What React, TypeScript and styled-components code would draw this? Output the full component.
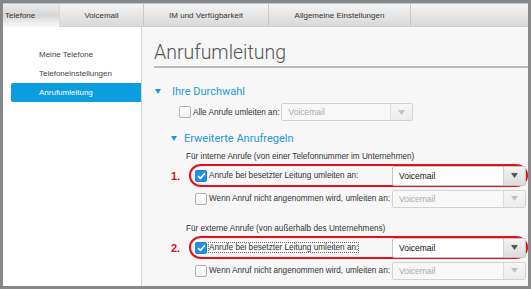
import styled, { createGlobalStyle } from "styled-components";

const GlobalStyle = createGlobalStyle`
  html, body {
    margin: 0;
    padding: 0;
  }
  body {
    background: #878787;
    font-family: "Liberation Sans", Arial, sans-serif;
  }
`;

const Frame = styled.div`
  width: 531px;
  height: 289px;
  box-sizing: border-box;
  padding: 3px;
  display: flex;
  flex-direction: column;
  overflow: hidden;
`;

const TabBar = styled.div`
  display: flex;
  flex: none;
  height: 24px;
  box-sizing: border-box;
  border-top: 1px solid #b4cadb;
  border-bottom: 1px solid #d0d0d0;
  background: linear-gradient(#f4f4f4, #d9d9d9);
`;

const Tab = styled.div<{ $width: number; $active?: boolean }>`
  width: ${(p) => p.$width}px;
  box-sizing: border-box;
  border-right: 1px solid #c9c9c9;
  display: flex;
  align-items: center;
  justify-content: ${(p) => (p.$active ? "flex-start" : "center")};
  padding-left: ${(p) => (p.$active ? "2px" : "0")};
  font-size: 8px;
  color: #333;
  ${(p) =>
    p.$active &&
    `
    background: linear-gradient(#ececec 0%, #d6d6d6 50%, #fbfbfb 100%);
    margin-bottom: -1px;
    border-right: 1px solid #d9d9d9;
  `}
`;

const Main = styled.div`
  flex: 1;
  display: flex;
  min-height: 0;
`;

const Sidebar = styled.nav`
  width: 138px;
  flex: none;
  background: #fff;
  border-right: 1px solid #d6d6d6;
  padding-top: 18px;
`;

const NavItem = styled.div<{ $active?: boolean }>`
  height: 19px;
  line-height: 19px;
  font-size: 8px;
  color: #444;
  padding-left: 36px;
  ${(p) =>
    p.$active &&
    `
    margin-left: 8px;
    padding-left: 28px;
    background: #0b9ddd;
    color: #fff;
    border-radius: 2px 0 0 2px;
  `}
`;

const Content = styled.main`
  flex: 1;
  background: #f7f7f7;
  padding: 14px 0 0 12px;
  overflow: hidden;
`;

const Title = styled.h1`
  margin: 0;
  font-family: Roboto, "Liberation Sans", sans-serif;
  font-weight: 300;
  font-size: 19.5px;
  line-height: 24px;
  color: #555;
  padding-bottom: 1px;
  border-bottom: 2px solid #b9b9b9;
  box-shadow: inset 0 -1px 0 #fff;
`;

const SectionHeader = styled.div<{ $indent: number; $gap: number; $top: number }>`
  display: flex;
  align-items: center;
  height: 16px;
  margin: ${(p) => p.$top}px 0 0 ${(p) => p.$indent}px;
  gap: ${(p) => p.$gap}px;
  font-family: Roboto, "Liberation Sans", sans-serif;
  font-size: 11px;
  color: #1b9ad6;
`;

const Caret = () => (
  <svg width="6" height="5" viewBox="0 0 6 5">
    <path d="M0 0 H6 L3 5 Z" fill="#1b9ad6" />
  </svg>
);

const CheckRow = styled.div`
  display: flex;
  align-items: center;
  height: 18px;
  margin: 4px 0 0 25px;
`;

const Box = styled.span<{ $checked?: boolean }>`
  width: 12px;
  height: 12px;
  flex: none;
  box-sizing: border-box;
  border-radius: 2px;
  display: flex;
  align-items: center;
  justify-content: center;
  border: 1px solid ${(p) => (p.$checked ? "#1d7fcf" : "#b3b3b3")};
  background: ${(p) => (p.$checked ? "#2290e8" : "linear-gradient(#fff, #f0f0f0)")};
`;

const Checkbox = ({ checked }: { checked?: boolean }) => (
  <Box $checked={checked}>
    {checked && (
      <svg width="9" height="8" viewBox="0 0 9 8">
        <path d="M1 4.2 L3.4 6.4 L8 1.2" stroke="#fff" strokeWidth="1.6" fill="none" />
      </svg>
    )}
  </Box>
);

const Label = styled.span<{ $width?: number }>`
  margin-left: 2px;
  font-size: 8.2px;
  color: #333;
  white-space: nowrap;
  ${(p) => p.$width && `width: ${p.$width}px; flex: none;`}
`;

const Focus = styled.span`
  outline: 1px dotted #666;
  outline-offset: 0;
`;

const SelectBox = styled.div<{ $disabled?: boolean; $width: number; $height: number }>`
  width: ${(p) => p.$width}px;
  height: ${(p) => p.$height}px;
  margin-left: 2px;
  flex: none;
  box-sizing: border-box;
  display: flex;
  border: 1px solid ${(p) => (p.$disabled ? "#d2d2d2" : "#c4c4c4")};
  border-radius: 2px;
  background: ${(p) => (p.$disabled ? "#f8f8f8" : "#fff")};
  overflow: hidden;
`;

const SelectText = styled.span<{ $disabled?: boolean }>`
  flex: 1;
  display: flex;
  align-items: center;
  padding-left: 6px;
  font-size: 8.5px;
  color: ${(p) => (p.$disabled ? "#aaa" : "#111")};
`;

const SelectArrow = styled.span<{ $disabled?: boolean }>`
  width: 21px;
  flex: none;
  display: flex;
  align-items: center;
  justify-content: center;
  border-left: 1px solid ${(p) => (p.$disabled ? "#dedede" : "#cfcfcf")};
  background: ${(p) =>
    p.$disabled ? "linear-gradient(#f6f6f6, #ececec)" : "linear-gradient(#f3f3f3, #dcdcdc)"};
`;

const Select = ({
  disabled,
  width,
  height,
}: {
  disabled?: boolean;
  width: number;
  height: number;
}) => (
  <SelectBox $disabled={disabled} $width={width} $height={height}>
    <SelectText $disabled={disabled}>Voicemail</SelectText>
    <SelectArrow $disabled={disabled}>
      <svg width="7" height="5" viewBox="0 0 7 5">
        <path d="M0 0 H7 L3.5 5 Z" fill={disabled ? "#c2c2c2" : "#555"} />
      </svg>
    </SelectArrow>
  </SelectBox>
);

const GroupLabel = styled.div<{ $top: number }>`
  margin: ${(p) => p.$top}px 0 1px 32px;
  height: 12px;
  line-height: 12px;
  font-size: 8.2px;
  color: #333;
  white-space: nowrap;
`;

const RuleRow = styled.div`
  display: flex;
  align-items: center;
  height: 23px;
  margin-left: 17px;
`;

const Marker = styled.span`
  width: 18px;
  flex: none;
  font-size: 11px;
  font-weight: bold;
  color: #e3101c;
`;

const Outline = styled.div<{ $marked?: boolean }>`
  flex: 1;
  height: 23px;
  box-sizing: border-box;
  display: flex;
  align-items: center;
  padding-left: 4px;
  border: 2px solid ${(p) => (p.$marked ? "#e3101c" : "transparent")};
  border-radius: 12px / 11px;
`;

type Rule = {
  marker?: string;
  checked?: boolean;
  text: string;
  focused?: boolean;
};

const RuleLine = ({ rule }: { rule: Rule }) => (
  <RuleRow>
    <Marker>{rule.marker}</Marker>
    <Outline $marked={!!rule.marker}>
      <Checkbox checked={rule.checked} />
      <Label $width={181}>{rule.focused ? <Focus>{rule.text}</Focus> : rule.text}</Label>
      <Select disabled={!rule.checked} width={134} height={rule.checked ? 20 : 18} />
    </Outline>
  </RuleRow>
);

const tabs = [
  { label: "Telefone", width: 57, active: true },
  { label: "Voicemail", width: 84 },
  { label: "IM und Verfügbarkeit", width: 125 },
  { label: "Allgemeine Einstellungen", width: 142 },
];

const groups: { label: string; rules: Rule[] }[] = [
  {
    label: "Für interne Anrufe (von einer Telefonnummer im Unternehmen)",
    rules: [
      { marker: "1.", checked: true, text: "Anrufe bei besetzter Leitung umleiten an:" },
      { text: "Wenn Anruf nicht angenommen wird, umleiten an:" },
    ],
  },
  {
    label: "Für externe Anrufe (von außerhalb des Unternehmens)",
    rules: [
      {
        marker: "2.",
        checked: true,
        focused: true,
        text: "Anrufe bei besetzter Leitung umleiten an:",
      },
      { text: "Wenn Anruf nicht angenommen wird, umleiten an:" },
    ],
  },
];

export default function App() {
  return (
    <>
      <GlobalStyle />
      <Frame>
        <TabBar>
          {tabs.map((t) => (
            <Tab key={t.label} $width={t.width} $active={t.active}>
              {t.label}
            </Tab>
          ))}
        </TabBar>
        <Main>
          <Sidebar>
            <NavItem>Meine Telefone</NavItem>
            <NavItem>Telefoneinstellungen</NavItem>
            <NavItem $active>Anrufumleitung</NavItem>
          </Sidebar>
          <Content>
            <Title>Anrufumleitung</Title>
            <SectionHeader $indent={1} $gap={11} $top={15}>
              <Caret />
              Ihre Durchwahl
            </SectionHeader>
            <CheckRow>
              <Checkbox />
              <Label>Alle Anrufe umleiten an:</Label>
              <Select disabled width={132} height={18} />
            </CheckRow>
            <SectionHeader $indent={17} $gap={7} $top={9}>
              <Caret />
              Erweiterte Anrufregeln
            </SectionHeader>
            {groups.map((g, i) => (
              <div key={g.label}>
                <GroupLabel $top={i === 0 ? 5 : 13}>{g.label}</GroupLabel>
                {g.rules.map((r, j) => (
                  <RuleLine key={j} rule={r} />
                ))}
              </div>
            ))}
          </Content>
        </Main>
      </Frame>
    </>
  );
}
